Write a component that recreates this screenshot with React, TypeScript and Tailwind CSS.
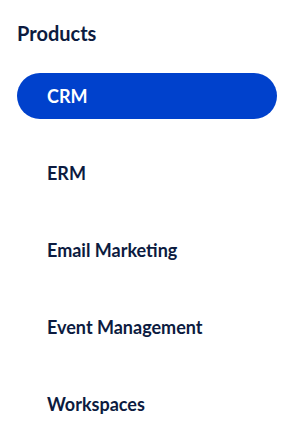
const products = ['CRM', 'ERM', 'Email Marketing', 'Event Management', 'Workspaces'];

export default function App() {
  const active = 'CRM';

  return (
    <div className="min-h-[447px] w-[307px] bg-white pl-[17px] pr-[30px] pt-[21px] font-['Lato','Liberation_Sans',sans-serif] text-[#0c1b40]">
      <h2 className="text-[20px] font-bold leading-[24px]">Products</h2>
      <ul className="mt-[28px] flex flex-col gap-[31px]">
        {products.map((p) => (
          <li key={p}>
            <a
              href="#"
              className={
                p === active
                  ? 'flex h-[46px] items-center rounded-full bg-[#0041cc] pl-[30px] text-[18px] font-bold text-white'
                  : 'flex h-[46px] items-center rounded-full pl-[30px] text-[18px] font-bold text-[#0c1b40]'
              }
            >
              {p}
            </a>
          </li>
        ))}
      </ul>
    </div>
  );
}
